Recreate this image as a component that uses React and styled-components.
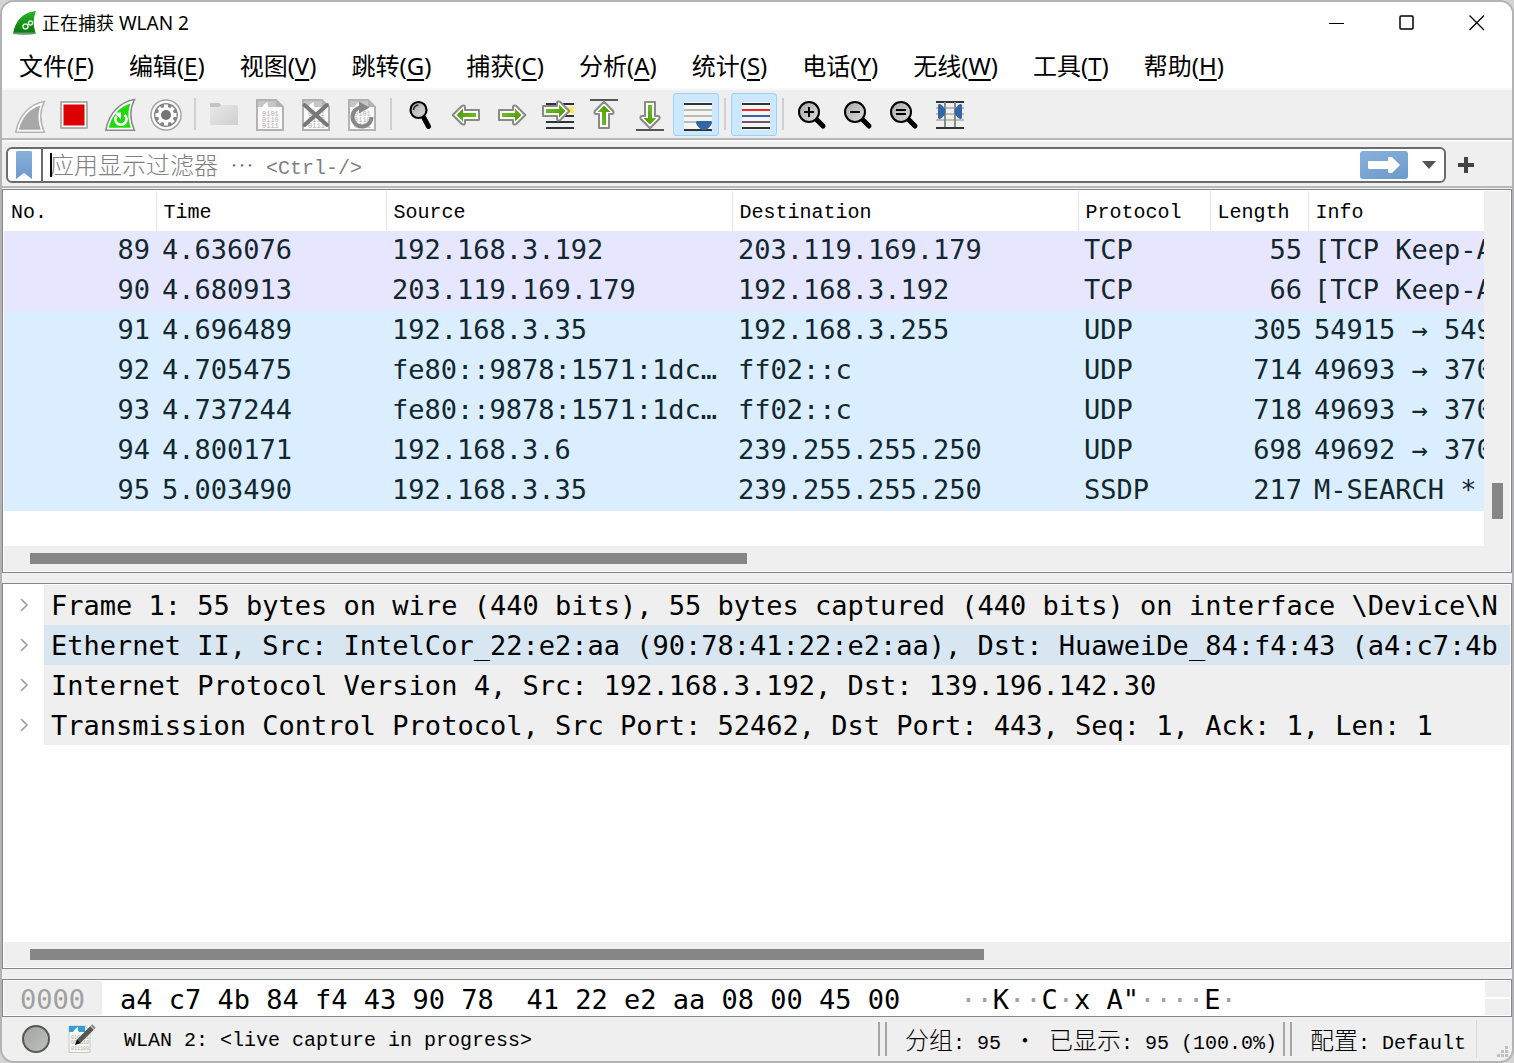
import React, { useState } from 'react'
import styled, { createGlobalStyle } from 'styled-components'

const GlobalStyle = createGlobalStyle`
* { box-sizing: border-box; }
body { margin: 0; background: #d4d4d4; }
button { font: inherit; color: inherit; background: none; border: 0; padding: 0; }
svg { display: block; overflow: visible; }
`

const Window = styled.div`
display: flex;
flex-direction: column;
min-height: 100vh;
border: 2px solid #b3b3b3;
border-radius: 14px;
background: #efefef;
overflow: hidden;
font-family: "Noto Sans", "Noto Sans CJK SC", sans-serif;
color: #000;
`

const TitleBar = styled.header`
display: flex;
align-items: center;
height: 42px;
padding-left: 10px;
background: #fff;
.title {
    flex: 1;
    margin: 0 0 0 5px;
    font-size: 19px;
    font-weight: 400;
    line-height: 24px;
}
.cn { font-size: 18px; }
`

const CaptionButton = styled.button`
display: flex;
align-items: center;
justify-content: center;
width: 70px;
height: 40px;
`

const MenuBar = styled.nav`
display: flex;
gap: 3px;
height: 44px;
padding-left: 1px;
background: #fff;
`

const MenuItem = styled.button`
padding: 0 16px;
font-size: 24px;
line-height: 44px;
white-space: nowrap;
text-underline-offset: 4px;
`

const ToolBar = styled.div`
display: flex;
height: 52px;
padding: 3px 3px 0;
border-top: 2px solid #f8f8f8;
border-bottom: 2px solid #b8b8b8;
`

const ToolButton = styled.button`
display: flex;
justify-content: center;
width: 46px;
height: 43px;
padding-top: ${p => p.$checked ? '5px' : '6px'};
border: ${p => p.$checked ? '1px solid #99d1ff' : '0'};
border-radius: 3px;
background: ${p => p.$checked ? '#cce8ff' : 'none'};
`

const Separator = styled.span`
width: 2px;
height: 32px;
margin: 5px;
background: #d0d0d0;
`

const FilterBar = styled.div`
display: flex;
align-items: center;
height: 48px;
padding: 2px 38px 0 4px;
border-top: 2px solid #f8f8f8;
border-bottom: 2px solid #b8b8b8;
gap: 12px;
`

const FilterBox = styled.div`
position: relative;
display: flex;
align-items: center;
flex: 1;
height: 36px;
border: 2px solid #6b6b6b;
border-radius: 6px;
background: #fff;
.bookmark {
    width: 35px;
    height: 32px;
    padding-left: 8px;
    border-right: 2px solid #6b6b6b;
}
input {
    flex: 1;
    min-width: 0;
    height: 28px;
    padding: 0 8px;
    border: 0;
    outline: 0;
    background: none;
    font: 20px "Liberation Mono", "Noto Sans CJK SC", monospace;
}
label {
    position: absolute;
    left: 42px;
    top: 0;
    color: #808080;
    pointer-events: none;
}
.caret {
    position: absolute;
    left: 42px;
    top: 4px;
    width: 2px;
    height: 24px;
    background: #000;
}
.drop {
    display: flex;
    justify-content: center;
    width: 36px;
    padding-left: 6px;
}
`

const ApplyButton = styled.button`
display: flex;
align-items: center;
justify-content: center;
width: 48px;
height: 28px;
border-radius: 3px;
background: linear-gradient(160deg, #8ab0da, #6c9acd);
`

const SongText = styled.span`
font-family: "Liberation Mono", "Noto Sans CJK SC", monospace;
font-size: 20px;
line-height: 30px;
white-space: pre;
.cn {
    font-family: "Noto Sans CJK SC", sans-serif;
    font-size: 24px;
    font-weight: 300;
    line-height: 30px;
}
`

const Panel = styled.section`
display: flex;
flex-direction: column;
flex: ${p => p.$grow ? '1' : 'none'};
min-width: 0;
margin: 1px 0 ${p => p.$last ? '0' : '9px'} 0;
padding: 1px;
border: 1px solid #828790;
background: #fff;
overflow: hidden;
`

const PacketArea = styled.div`
display: flex;
height: 355px;
.list {
    flex: 1;
    min-width: 0;
    overflow: hidden;
}
`

const PacketTable = styled.table`
width: 100%;
table-layout: fixed;
border-collapse: collapse;
font-family: "DejaVu Sans Mono", monospace;
font-size: 27px;
color: #12272e;
th {
    height: 40px;
    padding: 2px 0 0 7px;
    border-right: 1px solid #e5e5e5;
    text-align: left;
    font: 20px "Liberation Mono", monospace;
    color: #000;
}
th:last-child { border-right: 0; }
td {
    height: 40px;
    padding: 0 0 2px 6px;
    line-height: 38px;
    white-space: pre;
    overflow: hidden;
}
td.num {
    padding: 0 6px 2px 0;
    text-align: right;
}
`

const PacketRow = styled.tr`
background: ${p => p.$udp ? '#daeeff' : '#e7e6ff'};
`

const HScroll = styled.div`
height: 25px;
padding: 7px 26px 0;
background: #efefef;
div {
    width: ${p => p.$size};
    height: 11px;
    background: #868686;
}
`

const VScroll = styled.div`
display: flex;
flex-direction: column;
justify-content: flex-end;
align-items: center;
width: 26px;
padding-bottom: 27px;
background: #efefef;
div {
    width: 11px;
    height: 36px;
    background: #868686;
}
`

const Tree = styled.div`
flex: 1;
`

const TreeRow = styled.button`
display: flex;
align-items: center;
width: 100%;
height: 40px;
text-align: left;
svg { flex: none; width: 40px; }
span {
    flex: 1;
    min-width: 0;
    height: 40px;
    padding-left: 7px;
    background: ${p => p.$active ? '#d8e6f2' : '#efefef'};
    font-family: "DejaVu Sans Mono", monospace;
    font-size: 27px;
    line-height: 42px;
    white-space: pre;
    overflow: hidden;
}
`

const ByteRow = styled.div`
display: flex;
justify-content: space-between;
height: 34px;
font-family: "DejaVu Sans Mono", monospace;
font-size: 27px;
line-height: 38px;
white-space: pre;
.offset {
    width: 98px;
    padding-left: 16px;
    background: #efefef;
    color: #a0a0a0;
}
.bytes { padding-left: 18px; }
.ascii { flex: 1; padding-left: 60px; }
i { font-style: normal; color: #a0a0a0; }
`

const ByteScroll = styled.div`
display: grid;
grid-template-rows: 1fr 1fr;
gap: 2px;
width: 25px;
button { background: #efefef; }
`

const StatusBar = styled.footer`
display: flex;
align-items: center;
height: 44px;
padding: 0 35px 0 20px;
.edit { margin-left: 18px; }
`

const StatusText = styled(SongText)`
flex: ${p => p.$grow ? '1' : 'none'};
margin-left: ${p => p.$grow ? '28px' : '0'};
padding-top: 4px;
`

const Grip = styled.span`
width: 9px;
height: 34px;
margin: 0 18px 0 6px;
border-left: 2px solid #a6a6a6;
border-right: 2px solid #a6a6a6;
`

const Profile = styled.button`
display: flex;
align-items: center;
height: 38px;
padding-right: 10px;
border-right: 1px solid #d9d9d9;
`

const SizeGrip = styled.svg`
position: fixed;
right: 5px;
bottom: 5px;
`

const finPath = 'M29.5 .5 C15 3 4 14 .8 31.2 H29.3 C25 21 24.500 10 29.5 .5 Z'
const finInner = 'M25.500 4.500 C14.500 8 7 16 3.800 28.800 H25.800 C23 20 22.500 12 25.500 4.500 Z'

const Svg = ({ children }) => <svg width="32" height="32" viewBox="0 0 32 32">{children}</svg>

const Doc = ({ children }) => (
    <Svg>
        <path d="M3 1 H22 L29 8 V31 H3 Z" fill="#fafafa" stroke="#b2b2b2" strokeWidth="2" />
        <path d="M4 2 H22 V8 H4 Z" fill="#c6c6c6" />
        <path d="M22 1 L29 8 H22 Z" fill="#b2b2b2" />
        <path d="M8 9 C9 6 11 4 14 3 C13 6 14 8 15 9 Z" fill="#fff" />
        <g fill="#b0b0b0" fontFamily="Liberation Mono" fontSize="7">
            <text x="8" y="17">0101</text>
            <text x="8" y="23">0110</text>
            <text x="8" y="29">0111</text>
        </g>
        {children}
    </Svg>
)

const ArrowShape = ({ transform }) => (
    <g transform={transform}>
        <path d="M29.300 16 L20 6.800 Q17 5.500 17 8.500 V11 H3 V21 H17 V23.500 Q17 26.500 20 25.200 Z" fill="#fff" stroke="#888a85" strokeWidth="2" strokeLinejoin="round" />
        <path d="M25.500 16 L19 9.500 V14 H6 V18 H19 V22.500 Z" fill="url(#green)" />
    </g>
)

const Zoom = ({ d }) => (
    <Svg>
        <path d="M20.500 20.500 L27 27" stroke="#000" strokeWidth="5" strokeLinecap="round" />
        <circle cx="13" cy="13" r="10" fill="url(#lens)" stroke="#000" strokeWidth="2" />
        <path d={d} stroke="#000" strokeWidth="2" />
    </Svg>
)

const Lines = ({ colors, ys = [4, 10, 16, 22, 28], x = 4 }) => (
    <>
        <rect x={x} y="3" width="28" height="28" fill="#f5f5f3" />
        {colors.map((c, i) => <rect key={i} x={x} y={ys[i]} width="28" height="2" fill={c} />)}
    </>
)

const icons = {
    start: <Svg><g transform="translate(3 2)"><path d={finPath} fill="#fafafa" stroke="#b4b4b4" strokeWidth="1.500" /><path d={finInner} fill="#a8a8a8" /></g></Svg>,
    stop: <Svg><rect x="3" y="3" width="26" height="26" fill="#fff" stroke="#9a9a9a" strokeWidth="1.500" /><rect x="5.500" y="5.500" width="21" height="21" fill="#dc0000" /></Svg>,
    restart: (
        <Svg>
            <g transform="translate(1 0)">
                <path d={finPath} fill="#fff" stroke="#8a8a8a" strokeWidth="1.500" />
                <path d={finInner} fill="#1fdc08" />
                <path d="M11.500 17 A5.500 5.500 0 1 0 19.500 16" fill="none" stroke="#fff" strokeWidth="2.800" />
                <path d="M9 13.500 H16 V20.500 Z" fill="#fff" />
            </g>
        </Svg>
    ),
    options: (
        <Svg>
            <circle cx="16" cy="16" r="15" fill="#fff" stroke="#a5a5a5" strokeWidth="1.500" />
            <circle cx="16" cy="16" r="12" fill="#858585" />
            <circle cx="16" cy="16" r="8" fill="#fff" />
            {[0, 45, 90, 135].map(a => <path key={a} d="M16 5.500 V26.500" stroke="#fff" strokeWidth="4" transform={`rotate(${a} 16 16)`} />)}
            <circle cx="16" cy="16" r="5" fill="#757575" />
        </Svg>
    ),
    open: <Svg><path d="M2 5 Q2 4 3 4 H11 L13 6 H29 Q30 6 30 7 V25 Q30 26 29 26 H3 Q2 26 2 25 Z" fill="url(#folder)" /><path d="M2 5 Q2 4 3 4 H11 L13 6 L11 8 H2 Z" fill="#c4c4c4" /></Svg>,
    save: <Doc />,
    close: <Doc><path d="M4.500 6 L27 26 M27 6 L4.500 26" stroke="#787878" strokeWidth="4" strokeLinecap="round" /></Doc>,
    reload: <Doc><path d="M15 8.500 A9.500 9.500 0 1 0 25.500 18" fill="none" stroke="#878787" strokeWidth="4" /><path d="M13 2.500 L23.500 8.500 L13 14.500 Z" fill="#878787" /></Doc>,
    find: (
        <Svg>
            <path d="M20 19 L24.500 27.500" stroke="#000" strokeWidth="5" strokeLinecap="round" />
            <circle cx="14.500" cy="11" r="8" fill="url(#lens)" stroke="#000" strokeWidth="2.200" />
            <path d="M9.500 11 Q10 6.500 14.500 6" fill="none" stroke="#222" strokeWidth="1.500" />
        </Svg>
    ),
    back: <Svg><ArrowShape transform="rotate(180 16 16)" /></Svg>,
    forward: <Svg><ArrowShape /></Svg>,
    goto: (
        <Svg>
            {[4, 16, 22, 28].map(y => <rect key={y} x="4" y={y} width="28" height="2" fill="#2e3436" />)}
            <rect x="20" y="8" width="12" height="6" fill="#fce94f" />
            <ArrowShape transform="translate(-2 -4)" />
        </Svg>
    ),
    first: <Svg><rect x="2" y="0" width="28" height="2" fill="#555753" /><ArrowShape transform="rotate(-90 16 16)" /></Svg>,
    last: <Svg><ArrowShape transform="rotate(90 16 16)" /><rect x="2" y="30" width="28" height="2" fill="#555753" /></Svg>,
    autoscroll: (
        <Svg>
            <Lines colors={['#2e3436', '#babdb6', '#babdb6', '#babdb6', '#2e3436']} ys={[4, 10, 16, 22, 30]} />
            <path d="M16 23 Q16 22 18 22 H30 Q32 22 32 23 Q32 27 26 31 H22 Q16 27 16 23 Z" fill="#3465a4" />
        </Svg>
    ),
    colorize: <Svg><Lines colors={['#2e3436', '#ef2929', '#3465a4', '#75507b', '#2e3436']} /></Svg>,
    zoomIn: <Zoom d="M8 13 H18 M13 8 V18" />,
    zoomOut: <Zoom d="M8 13 H18" />,
    zoomReset: <Zoom d="M8 11 H18 M8 15 H18" />,
    resize: (
        <Svg>
            {['#2e3436', '#babdb6', '#babdb6', '#babdb6', '#2e3436'].map((c, i) => <rect key={i} x="2" y={[2, 8, 14, 20, 28][i]} width="28" height="2" fill={c} />)}
            <path d="M11 3 V28 M21 3 V28" stroke="#888a85" strokeWidth="2" />
            <path d="M4 6 Q4 5 6 5 Q11 8 11.500 12.500 Q11 17 6 20 Q4 20 4 19 Z" fill="#3465a4" />
            <path d="M28 6 Q28 5 26 5 Q21 8 20.500 12.500 Q21 17 26 20 Q28 20 28 19 Z" fill="#3465a4" />
        </Svg>
    ),
}

const tools = [
    ['start', '开始捕获'], ['stop', '停止捕获'], ['restart', '重新开始捕获'], ['options', '捕获选项'], null,
    ['open', '打开'], ['save', '保存'], ['close', '关闭'], ['reload', '重新加载'], null,
    ['find', '查找'], ['back', '后退'], ['forward', '前进'], ['goto', '转到分组'], ['first', '首个分组'], ['last', '最新分组'], ['autoscroll', '自动滚动', true], null,
    ['colorize', '着色', true], null,
    ['zoomIn', '放大'], ['zoomOut', '缩小'], ['zoomReset', '正常大小'], ['resize', '调整列宽'],
]

const menus = [
    ['文件', 'F'], ['编辑', 'E'], ['视图', 'V'], ['跳转', 'G'], ['捕获', 'C'], ['分析', 'A'],
    ['统计', 'S'], ['电话', 'Y'], ['无线', 'W'], ['工具', 'T'], ['帮助', 'H'],
]

const packets = [
    [89, '4.636076', '192.168.3.192', '203.119.169.179', 'TCP', 55, '[TCP Keep-A'],
    [90, '4.680913', '203.119.169.179', '192.168.3.192', 'TCP', 66, '[TCP Keep-A'],
    [91, '4.696489', '192.168.3.35', '192.168.3.255', 'UDP', 305, '54915 → 549'],
    [92, '4.705475', 'fe80::9878:1571:1dc…', 'ff02::c', 'UDP', 714, '49693 → 370'],
    [93, '4.737244', 'fe80::9878:1571:1dc…', 'ff02::c', 'UDP', 718, '49693 → 370'],
    [94, '4.800171', '192.168.3.6', '239.255.255.250', 'UDP', 698, '49692 → 370'],
    [95, '5.003490', '192.168.3.35', '239.255.255.250', 'SSDP', 217, 'M-SEARCH *'],
]

const details = [
    'Frame 1: 55 bytes on wire (440 bits), 55 bytes captured (440 bits) on interface \\Device\\N',
    'Ethernet II, Src: IntelCor_22:e2:aa (90:78:41:22:e2:aa), Dst: HuaweiDe_84:f4:43 (a4:c7:4b',
    'Internet Protocol Version 4, Src: 192.168.3.192, Dst: 139.196.142.30',
    'Transmission Control Protocol, Src Port: 52462, Dst Port: 443, Seq: 1, Ack: 1, Len: 1',
]

const Gradients = () => (
    <svg width="0" height="0" style={{ position: 'absolute' }}>
        <defs>
            <linearGradient id="green" x1="0" y1="0" x2="1" y2="1"><stop offset="0" stopColor="#7cc82c" /><stop offset="1" stopColor="#459003" /></linearGradient>
            <linearGradient id="lens" x1="0" y1="0" x2="1" y2="1"><stop offset="0" stopColor="#a8a8a8" /><stop offset="1" stopColor="#dcdcdc" /></linearGradient>
            <linearGradient id="folder" x1="0" y1="0" x2="1" y2="1"><stop offset="0" stopColor="#eaeaea" /><stop offset="1" stopColor="#cfcfcf" /></linearGradient>
            <linearGradient id="logo" x1="0" y1="0" x2="0" y2="1"><stop offset="0" stopColor="#2bb52b" /><stop offset="0.850" stopColor="#0d7a10" /><stop offset="1" stopColor="#9fb89f" /></linearGradient>
            <linearGradient id="blue" x1="0" y1="0" x2="0" y2="1"><stop offset="0" stopColor="#8ab0da" /><stop offset="1" stopColor="#6c9acd" /></linearGradient>
            <linearGradient id="led" x1="0" y1="0" x2="1" y2="1"><stop offset="0" stopColor="#a2a59f" /><stop offset="1" stopColor="#bfc2bb" /></linearGradient>
        </defs>
    </svg>
)

function App() {
    const [filter, setFilter] = useState('')
    const [active, setActive] = useState(1)

    return (
        <Window>
            <GlobalStyle />
            <Gradients />
            <TitleBar>
                <svg width="25" height="24" viewBox="0 0 25 24">
                    <path d="M24 0 C12 1 3 9 1 23 Q12 25 24 23 C21 15 21 7 24 0 Z" fill="url(#logo)" />
                    <g fill="none" stroke="#d5ecd5" strokeWidth="1.500">
                        <circle cx="13.500" cy="15.500" r="2.500" />
                        <circle cx="18.500" cy="12" r="2" />
                    </g>
                </svg>
                <h1 className="title"><span className="cn">正在捕获</span> WLAN 2</h1>
                <CaptionButton aria-label="最小化"><svg width="16" height="16"><path d="M0 8.500 H15" stroke="#000" /></svg></CaptionButton>
                <CaptionButton aria-label="最大化"><svg width="16" height="16"><rect x="1" y="1" width="13" height="13" rx="1" fill="none" stroke="#000" strokeWidth="1.500" /></svg></CaptionButton>
                <CaptionButton aria-label="关闭窗口"><svg width="16" height="16"><path d="M.5 .5 L15 15 M15 .5 L.5 15" stroke="#000" strokeWidth="1.300" /></svg></CaptionButton>
            </TitleBar>
            <MenuBar>
                {menus.map(([name, key]) => <MenuItem key={key}>{name}(<u>{key}</u>)</MenuItem>)}
            </MenuBar>
            <ToolBar>
                {tools.map((t, i) => t
                    ? <ToolButton key={i} aria-label={t[1]} $checked={t[2]}>{icons[t[0]]}</ToolButton>
                    : <Separator key={i} />)}
            </ToolBar>
            <FilterBar>
                <FilterBox>
                    <button className="bookmark" aria-label="书签">
                        <svg width="16" height="28"><path d="M0 1 Q0 0 1 0 H15 Q16 0 16 1 V28 L8 22 L0 28 Z" fill="url(#blue)" /></svg>
                    </button>
                    <input id="filter" aria-label="应用显示过滤器" value={filter} onChange={e => setFilter(e.target.value)} />
                    {!filter && <label htmlFor="filter"><SongText><span className="cn">应用显示过滤器</span> <span className="cn">⋯</span> &lt;Ctrl-/&gt;</SongText></label>}
                    {!filter && <span className="caret" />}
                    <ApplyButton aria-label="应用">
                        <svg width="32" height="16"><path d="M0 5 Q0 4 1 4 H20 V1 Q20 0 22 0 H24 L32 8 L24 16 H22 Q20 16 20 15 V12 H1 Q0 12 0 11 Z" fill="#fff" /></svg>
                    </ApplyButton>
                    <button className="drop" aria-label="历史">
                        <svg width="14" height="8"><path d="M0 0 H14 L7 8 Z" fill="#555" /></svg>
                    </button>
                </FilterBox>
                <button aria-label="添加"><svg width="16" height="16"><path d="M0 8 H16 M8 0 V16" stroke="#444" strokeWidth="4" /></svg></button>
            </FilterBar>

            <Panel>
                <PacketArea>
                    <div className="list">
                        <PacketTable>
                            <colgroup>
                                <col width="152" /><col width="230" /><col width="346" /><col width="346" /><col width="132" /><col width="98" /><col />
                            </colgroup>
                            <thead>
                                <tr><th>No.</th><th>Time</th><th>Source</th><th>Destination</th><th>Protocol</th><th>Length</th><th>Info</th></tr>
                            </thead>
                            <tbody>
                                {packets.map(p => (
                                    <PacketRow key={p[0]} $udp={p[4] !== 'TCP'}>
                                        {p.map((v, i) => <td key={i} className={i === 0 || i === 5 ? 'num' : undefined}>{v}</td>)}
                                    </PacketRow>
                                ))}
                            </tbody>
                        </PacketTable>
                    </div>
                    <VScroll><div /></VScroll>
                </PacketArea>
                <HScroll $size="49.3%"><div /></HScroll>
            </Panel>

            <Panel $grow>
                <Tree>
                    {details.map((d, i) => (
                        <TreeRow key={d} $active={i === active} onClick={() => setActive(i)}>
                            <svg width="40" height="14"><path d="M17 1 L23 7 L17 13" fill="none" stroke="#9a9a9a" strokeWidth="1.500" /></svg>
                            <span>{d}</span>
                        </TreeRow>
                    ))}
                </Tree>
                <HScroll $size="65.6%"><div /></HScroll>
            </Panel>

            <Panel $last>
                <ByteRow>
                    <span className="offset">0000</span>
                    <span className="bytes">a4 c7 4b 84 f4 43 90 78  41 22 e2 aa 08 00 45 00</span>
                    <span className="ascii"><i>··</i>K<i>··</i>C<i>·</i>x A"<i>····</i>E<i>·</i></span>
                    <ByteScroll><button aria-label="向上" /><button aria-label="向下" /></ByteScroll>
                </ByteRow>
            </Panel>

            <StatusBar>
                <button aria-label="专家信息"><svg width="28" height="28"><circle cx="14" cy="14" r="13" fill="url(#led)" stroke="#555753" strokeWidth="2" /></svg></button>
                <button className="edit" aria-label="捕获文件注释">
                    <svg width="28" height="28">
                        <path d="M1 1 H17 L22 6 V27.500 H1 Z" fill="#f4f4f0" stroke="#c8c8c4" />
                        <path d="M1 1 H17 V7 H1 Z" fill="#2f9fdc" />
                        <path d="M5 7 Q7 3 10 2 Q9 5 11 7 Z" fill="#fff" />
                        <g fill="#b0b0ac" fontFamily="Liberation Mono" fontSize="5"><text x="3" y="14">010101</text><text x="3" y="19">001110</text><text x="3" y="25">011100</text></g>
                        <path d="M11 16 L24 3" stroke="#555753" strokeWidth="5" />
                        <path d="M24.500 2.500 L26 1" stroke="#888a85" strokeWidth="5" />
                        <path d="M7 20 L9 14 L13 18 Z" fill="#111" />
                    </svg>
                </button>
                <StatusText $grow>WLAN 2: &lt;live capture in progress&gt;</StatusText>
                <Grip />
                <StatusText><span className="cn">分组</span>: 95 <span className="cn">・</span> <span className="cn">已显示</span>: 95 (100.0%)</StatusText>
                <Grip />
                <Profile><StatusText><span className="cn">配置</span>: Default</StatusText></Profile>
            </StatusBar>
            <SizeGrip width="12" height="12">
                {[[8, 0], [8, 4], [4, 4], [8, 8], [4, 8], [0, 8]].map(([x, y]) => <rect key={`${x}${y}`} x={x} y={y} width="3" height="3" fill="#bfbfbf" />)}
            </SizeGrip>
        </Window>
    )
}

export default App
